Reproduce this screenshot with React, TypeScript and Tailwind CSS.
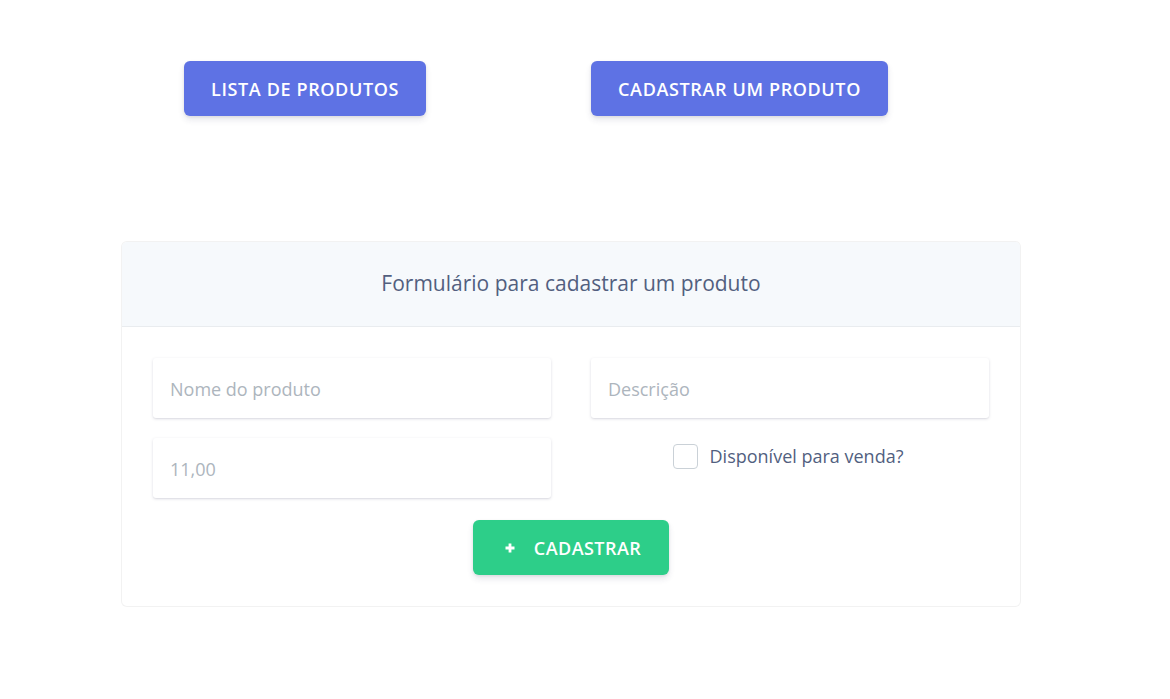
import { useState } from "react";

const font = { fontFamily: '"Open Sans", "Noto Sans", sans-serif' };

function BotaoTopo({ children }: { children: string }) {
  return (
    <button
      type="button"
      className="flex h-[55px] items-center rounded-md bg-[#5e72e4] px-[27px] pt-[1px] text-[18px] font-semibold uppercase tracking-[0.035em] text-white shadow-[0_4px_6px_rgba(50,50,93,0.11),0_1px_3px_rgba(0,0,0,0.08)]"
    >
      {children}
    </button>
  );
}

function Campo({ placeholder }: { placeholder: string }) {
  return (
    <input
      placeholder={placeholder}
      className="h-[60px] w-full rounded-[3px] bg-white px-[17px] pt-[1px] text-[18px] text-[#525f7f] shadow-[0_1px_3px_rgba(50,50,93,0.18),0_1px_0_rgba(0,0,0,0.02)] outline-none placeholder:text-[#adb5bd]"
    />
  );
}

export default function App() {
  const [disponivel, setDisponivel] = useState(false);

  return (
    <div className="min-h-screen bg-white" style={font}>
      <div className="flex gap-[165px] pl-[184px] pt-[61px]">
        <BotaoTopo>Lista de produtos</BotaoTopo>
        <BotaoTopo>Cadastrar um produto</BotaoTopo>
      </div>

      <div className="ml-[121px] mt-[125px] w-[900px] overflow-hidden rounded-md border border-[#0000000d] bg-white">
        <div className="flex h-[85px] items-center justify-center border-b border-[#e9ecef] bg-[#f6f9fc]">
          <h3 className="text-[21px] text-[#525f7f]">Formulário para cadastrar um produto</h3>
        </div>
        <div className="px-[31px] pb-[31px] pt-[31px]">
          <div className="grid grid-cols-2 gap-x-[40px] gap-y-[20px]">
            <Campo placeholder="Nome do produto" />
            <Campo placeholder="Descrição" />
            <Campo placeholder="11,00" />
            <label className="flex cursor-pointer items-start justify-center gap-[12px] pr-[4px] pt-[6px]">
              <span
                onClick={() => setDisponivel(!disponivel)}
                className={`h-[25px] w-[25px] shrink-0 rounded-[4px] border ${disponivel ? "border-[#5e72e4] bg-[#5e72e4]" : "border-[#cad1d7] bg-white"}`}
              />
              <span className="text-[18px] leading-[25px] text-[#525f7f]">Disponível para venda?</span>
            </label>
          </div>
          <div className="mt-[22px] flex justify-center">
            <button
              type="button"
              className="flex h-[55px] items-center gap-[19px] rounded-md bg-[#2dce89] px-[28px] pt-[1px] text-[18px] font-semibold uppercase tracking-[0.025em] text-white shadow-[0_4px_6px_rgba(50,50,93,0.11),0_1px_3px_rgba(0,0,0,0.08)]"
            >
              <svg viewBox="0 0 10 10" className="ml-[4px] h-[10px] w-[10px]" fill="white">
                <path d="M3.6 0.5h2.8v3.1h3.1v2.8H6.4v3.1H3.6V6.4H0.5V3.6h3.1z" />
              </svg>
              Cadastrar
            </button>
          </div>
        </div>
      </div>
    </div>
  );
}
